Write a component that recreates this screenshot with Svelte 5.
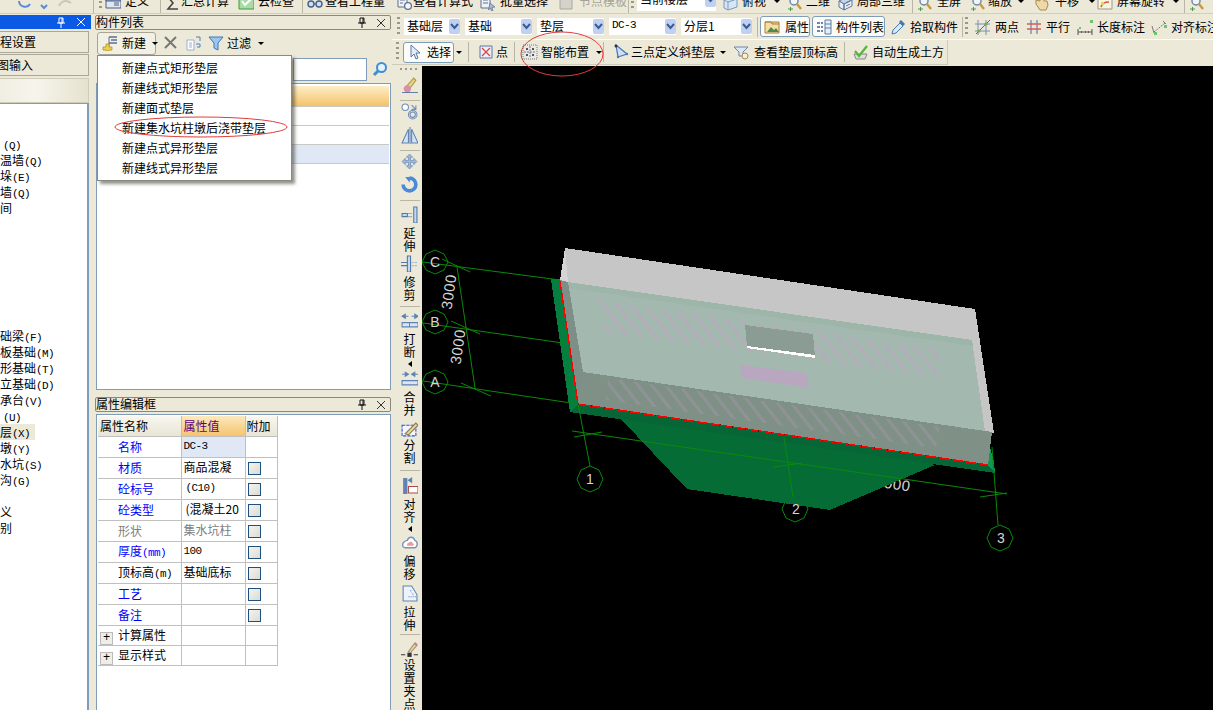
<script>
  const icons = {
    plusnew: '<path d="M7 2h8M9 5h6M7 8h8" stroke="#5a6f95" stroke-width="1.4"/><path d="M7 2v10" stroke="#5a6f95"/><path d="M4 9h3v3h3v3H7v1H4v-1H1v-3h3z" fill="#f2cf4a" stroke="#a58a22" stroke-width=".7"/>',
    del: '<path d="M2 2l11 11M13 2L2 13" stroke="#777" stroke-width="2"/>',
    copy: '<path d="M2 5h7v10H2z" fill="#fff" stroke="#9cb0cc"/><path d="M4 8h3M4 10h3M4 12h3" stroke="#9cb0cc"/><path d="M11 2h4v4M11 9h4v3h-3" fill="none" stroke="#4f7fbf"/>',
    funnel: '<path d="M1 2h14L10 8v7l-4-2V8z" fill="#9cc6ec" stroke="#3f78b8"/>',
    search: '<circle cx="9.5" cy="6.5" r="4.5" fill="#e4f2fd" stroke="#3c8fd6" stroke-width="2"/><path d="M6 10l-4 4" stroke="#3c8fd6" stroke-width="3"/>',
    def: '<path d="M1 3h15v10H1z" fill="#dfe6f2" stroke="#4d5f80"/><path d="M1 3h15v3H1z" fill="#8ea6cc" stroke="#4d5f80"/><path d="M9 8h5M9 10h5" stroke="#4d5f80"/>',
    sigma: '<path d="M13 2H3l5 6-5 6h10" fill="none" stroke="#444" stroke-width="1.6"/>',
    cloud: '<path d="M1 1h15v13H1z" fill="#a7dca7" stroke="#3e9c3e"/><path d="M4 6l3 4 6-6" fill="none" stroke="#fff" stroke-width="2"/>',
    glass: '<circle cx="4" cy="9" r="3" fill="#cfe0f2" stroke="#45608a" stroke-width="1.4"/><circle cx="12" cy="9" r="3" fill="#cfe0f2" stroke="#45608a" stroke-width="1.4"/><path d="M7 9h2" stroke="#45608a"/>',
    calc: '<path d="M1 2h9v10H1z" fill="#eef2f8" stroke="#5e7190"/><circle cx="11" cy="11" r="3.4" fill="#f5f8fb" stroke="#5e7190" stroke-width="1.3"/><path d="M3 5h5M3 8h3" stroke="#5e7190"/>',
    batch: '<path d="M1 2h9v11H1z" fill="#eef2f8" stroke="#5e7190"/><path d="M3 5h5M3 8h5" stroke="#5e7190"/><path d="M10 8l5 4-3 .5 1 3-1.500 .5-1-3-2 2z" fill="#a4b8dc" stroke="#4d5f80" stroke-width=".6"/>',
    tmpl: '<path d="M2 4h12v10H2z" fill="#d5d3c9" stroke="#aaa89e"/><path d="M5 1h6v3H5z" fill="#c8c6bc"/>',
    cube: '<path d="M2 5l9-3 4 2v8l-9 3-4-2z" fill="#d7e6f4" stroke="#7d9ab8"/><path d="M2 5l4 2 9-3M6 7v8" fill="none" stroke="#7d9ab8"/>',
    mag: '<circle cx="7" cy="6" r="4" fill="#f0f5fa" stroke="#6a86a8" stroke-width="1.4"/><path d="M10 9l4 5" stroke="#c99a3c" stroke-width="2.4"/><path d="M1 14h5M3.500 12v4" stroke="#4a9a4a"/>',
    cube2: '<path d="M2 6l8-4 5 3-8 4z" fill="#c4d4ea" stroke="#60789c"/><path d="M2 6v6l5 3V9zM7 9v6l8-4V5z" fill="#e8eef6" stroke="#60789c"/><path d="M9 8l4-2M9 11l4-2" stroke="#60789c"/>',
    hand: '<path d="M3 5l4 1V2l3 0 1 4 3 0 1 4-2 5H7L3 9z" fill="#f0d9a8" stroke="#a88a50"/>',
    rot: '<path d="M1 1h14v13H1z" fill="#f6f4e4" stroke="#9a9a8a"/><path d="M1 4h14" stroke="#5a8adf" stroke-width="2"/><path d="M4 12c1-4 4-5 8-5" fill="none" stroke="#d65a2a" stroke-width="1.6"/><path d="M4 7h3v3H4z" fill="#f2cf4a"/>',
    prop: '<path d="M1 3h14v11H1z" fill="#f6dfa4" stroke="#a0803c"/><path d="M1 3h6l1 2h7" fill="#f2c66a" stroke="#a0803c"/><path d="M3 13l4-5 3 3 2-2 3 4z" fill="#54894c"/>',
    list: '<path d="M1 3h3v2H1zM1 7h3v2H1zM1 11h3v2H1zM5 3h2v2H5zM5 7h2v2H5zM5 11h2v2H5z" fill="#6b86b0"/><path d="M9 1h6v14H9z" fill="#e6eef8" stroke="#5c7ba8"/><path d="M9 5h6M9 9h6" stroke="#5c7ba8"/>',
    pick: '<path d="M2 15l1-4 7-7 3 3-7 7z" fill="#d9e8f7" stroke="#4a78ac"/><path d="M9 3l2-2 4 4-2 2z" fill="#4a78ac"/>',
    two: '<path d="M3 1v15M11 1v15M0 5h15M0 12h15" stroke="#7d8db8"/><path d="M1 15L15 1" stroke="#d93a2a"/><circle cx="4" cy="12" r="1.600" fill="#6ab04a"/><circle cx="11" cy="5" r="1.600" fill="#6ab04a"/>',
    para: '<path d="M5 1v14M11 1v14" stroke="#7d8db8" stroke-width="1.4"/><path d="M1 5h14M1 10h14" stroke="#d0605a" stroke-width="1.4"/>',
    dim: '<path d="M1 13h14M1 10v6M15 10v6" stroke="#555"/><path d="M4 13h1M8 13h1M11 13h1" stroke="#222"/><path d="M2 8h2v2H2zM13 1h3v3h-3z" fill="#6cc46c"/>',
    ali: '<path d="M3 13L14 4" stroke="#777" stroke-dasharray="2 1"/><path d="M1 7l2 7M12 2l3 3" stroke="#777"/><path d="M13 6h3v3h-3zM3 13h3v3H3z" fill="#6cc46c"/>',
    sel: '<path d="M4 1v12l3-3 2 5 2-1-2-5h4z" fill="#e4ecf8" stroke="#5a78a8"/>',
    pt: '<path d="M2 2h12v12H2z" fill="#e9eef8" stroke="#5e75a6"/><path d="M4 4l8 8M12 4l-8 8" stroke="#d7473c" stroke-width="1.2"/>',
    smart: '<path d="M1 1h14v14H1z" fill="#eaeaea" stroke="#777" stroke-dasharray="1 1"/><path d="M8 2v12M2 8h12" stroke="#777" stroke-dasharray="2 1"/><circle cx="5" cy="5" r="1" fill="#222"/><circle cx="11" cy="5" r="1" fill="#222"/><circle cx="5" cy="11" r="1" fill="#222"/><circle cx="11" cy="11" r="1" fill="#222"/>',
    tri: '<path d="M3 1l2 12 9-3z" fill="#cde0f5" stroke="#4e78b8" stroke-width="1.3"/><circle cx="3" cy="2" r="1.500" fill="#333"/><circle cx="14" cy="10" r="1.200" fill="#4e78b8"/><circle cx="5" cy="13" r="1.200" fill="#4e78b8"/>',
    topv: '<path d="M1 3h14L10 8v4H6V8z" fill="#dde8f4" stroke="#6a86a8"/><circle cx="12" cy="12" r="3" fill="#f3f0d8" stroke="#a88a50"/>',
    auto: '<path d="M2 10h13l-2 5H4z" fill="#ddd" stroke="#888"/><path d="M3 7l4 5 8-10" fill="none" stroke="#55b53f" stroke-width="2.2"/>',
    brush: '<path d="M3 12l9-10 2 2-8 11z" fill="#e6d285" stroke="#b09a4a"/><circle cx="6" cy="12" r="3.400" fill="#d890a8"/><path d="M1 16h16" stroke="#4e6a9a" stroke-width="1.600"/>',
    circ: '<circle cx="4" cy="4" r="3" fill="#fff" stroke="#6f8db8"/><circle cx="11" cy="11" r="4" fill="none" stroke="#6f8db8"/><circle cx="11" cy="11" r="2.500" fill="none" stroke="#6f8db8"/><path d="M10 2l4 4M14 2v4h-4" fill="none" stroke="#6f8db8"/>',
    mirror: '<path d="M7 2L1 15h6zM10 2l6 13h-6z" fill="#d4e2f2" stroke="#5f83b4"/><path d="M8.500 0v16" stroke="#5f83b4"/>',
    move: '<path d="M8 1l3 3H9v3h3V5l3 3-3 3V9H9v3h2l-3 3-3-3h2V9H4v2L1 8l3-3v2h3V4H5z" fill="#9db8da" stroke="#5f83b4" stroke-width=".6"/>',
    rotv: '<path d="M8 2A6 6 0 1 1 2 8" fill="none" stroke="#4a8ad6" stroke-width="3.400"/><path d="M4 1l5 0-1 5z" fill="#4a8ad6"/>',
    ext: '<path d="M12 1h3v15h-3z" fill="#c7d8ec" stroke="#4f78ac"/><path d="M1 7h5v3H1z" fill="#c7d8ec" stroke="#4f78ac"/><path d="M7 7h4M7 10h4" stroke="#4f78ac" stroke-dasharray="1 1"/>',
    trim: '<path d="M6 1h3v15H6z" fill="#c7d8ec" stroke="#4f78ac"/><path d="M0 7h6M0 10h6" stroke="#4f78ac"/><path d="M10 7h6M10 10h6" stroke="#9fb6d4" stroke-dasharray="2 1"/>',
    brk: '<path d="M1 10h15v4H1z" fill="#dce6f2" stroke="#5f83b4"/><path d="M8 10v4" stroke="#5f83b4"/><path d="M7 4H1M1 4l3-2v4zM10 4h6M16 4l-3-2v4z" fill="#5f83b4" stroke="#5f83b4"/>',
    mrg: '<path d="M1 10h15v4H1z" fill="#dce6f2" stroke="#5f83b4"/><path d="M1 4h6M7 4L4 2v4zM16 4h-6M10 4l3-2v4z" fill="#5f83b4" stroke="#5f83b4"/>',
    spl: '<path d="M1 4h13v10H1z" fill="#f4f7fb" stroke="#2f4fe0" stroke-dasharray="3 1"/><path d="M4 12L14 2l2 2-9 9z" fill="#ecd8a0" stroke="#8a7a50"/>',
    alv: '<path d="M2 1h4v15H2z" fill="#5f83b4"/><path d="M9 3H7M7 3l3-2v4z" fill="#5f83b4" stroke="#5f83b4"/><path d="M7 9h9v6H7z" fill="#fff" stroke="#b04a4a"/>',
    off: '<path d="M2 12c-2-4 3-6 4-6 1-4 6-4 7 0 3 1 3 6 0 7H4z" fill="#fff" stroke="#7a93b8" stroke-width="1.300"/><path d="M6 11c-1-2 1-3 2-3 1-2 3 0 3 1 2 0 1 2 0 2z" fill="#e89a9a"/>',
    str: '<path d="M2 1h8l5 8v6H2z" fill="#eef3fa" stroke="#5f83b4"/><path d="M9 5l1 2M11 8l1 2M7 11h7" stroke="#5f83b4" stroke-dasharray="1 1"/>',
    grip: '<path d="M0 13h4M12 13h4" stroke="#333"/><path d="M6 11h4v4H6z" fill="#333"/><path d="M7 10l6-8 2 2-6 7z" fill="#ecd8a0" stroke="#a0907a"/><path d="M13 2l2 2" stroke="#d87a7a" stroke-width="2"/>'
  };

  const topItems = [
    { icon: 'def', label: '定义', w: 51, sep: true },
    { icon: 'sigma', label: '汇总计算', w: 73, g: 0 },
    { icon: 'cloud', label: '云检查', w: 60, sep: true },
    { icon: 'glass', label: '查看工程量', w: 90, g: 2 },
    { icon: 'calc', label: '查看计算式', w: 83, g: 0 },
    { icon: 'batch', label: '批量选择', w: 78 },
    { icon: 'tmpl', label: '节点模板', w: 69, off: true, g: 5 }
  ];
  const topRight = [
    { icon: 'cube', label: '俯视', w: 65, caret: true },
    { icon: 'mag', label: '二维', w: 50, g: 3 },
    { icon: 'cube2', label: '局部三维', w: 71, sep: true },
    { icon: 'mag', label: '全屏', w: 53 },
    { icon: 'mag', label: '缩放', w: 63, g: 2, caret: true },
    { icon: 'hand', label: '平移', w: 64, g: 6, caret: true },
    { icon: 'rot', label: '屏幕旋转', w: 83, caret: true, sep: true },
    { icon: 'mag', label: '', w: 24 }
  ];
  const combos = [
    { label: '基础层', w: 56 }, { label: '基础', w: 67 }, { label: '垫层', w: 67 },
    { label: 'DC-3', w: 67, m: true }, { label: '分层1', w: 71 }
  ];
  const tree = [
    ['', ''], ['', ''], ['', '(Q)'], ['温墙', '(Q)'], ['垛', '(E)'], ['墙', '(Q)'], ['间', ''],
    ['', ''], ['', ''], ['', ''], ['', ''], ['', ''], ['', ''], ['', ''],
    ['础梁', '(F)'], ['板基础', '(M)'], ['形基础', '(T)'], ['立基础', '(D)'], ['承台', '(V)'], ['', '(U)'],
    ['层', '(X)'], ['墩', '(Y)'], ['水坑', '(S)'], ['沟', '(G)'], ['', ''], ['义', ''], ['别', '']
  ];
  const menu = ['新建点式矩形垫层', '新建线式矩形垫层', '新建面式垫层', '新建集水坑柱墩后浇带垫层', '新建点式异形垫层', '新建线式异形垫层'];
  const props = [
    { n: '名称', v: 'DC-3', c: 'blue', sel: true, nochk: true, m: true },
    { n: '材质', v: '商品混凝', c: 'blue' },
    { n: '砼标号', v: '(C10)', c: 'blue', m: true, ind: true },
    { n: '砼类型', v: '(混凝土20', c: 'blue', ind: true },
    { n: '形状', v: '集水坑柱', c: 'gray' },
    { n: '厚度', unit: '(mm)', v: '100', c: 'blue', m: true },
    { n: '顶标高', unit: '(m)', v: '基础底标', c: 'black' },
    { n: '工艺', v: '', c: 'blue' },
    { n: '备注', v: '', c: 'blue' }
  ];
  const vtools = [
    { icon: 'brush', h: 21 }, { sep: true }, { icon: 'circ', h: 24 }, { icon: 'mirror', h: 20 }, { sep: true },
    { icon: 'move', h: 23 }, { icon: 'rotv', h: 21 }, { sep: true },
    { icon: 'ext', t: '延伸', h: 52, pt: 3 }, { icon: 'trim', t: '修剪', h: 48 }, { sep: true },
    { icon: 'brk', t: '打断', more: true, h: 61, pt: 3 }, { icon: 'mrg', t: '合并', h: 51 },
    { icon: 'spl', t: '分割', h: 46, g: 0 }, { sep: true },
    { icon: 'alv', t: '对齐', more: true, h: 61, pt: 4 }, { icon: 'off', t: '偏移', h: 51 }, { icon: 'str', t: '拉伸', h: 46 }, { sep: true },
    { icon: 'grip', t: '设置夹点', h: 74, pt: 4, g: 0 }
  ];
  const greyPts = '565,248 975,309 994,433 985,431 972,340 568,282';
</script>

{#snippet ic(name, size = 16)}
  <svg class="ic" width={size} height={size} viewBox="0 0 16 16">{@html icons[name]}</svg>
{/snippet}

{#snippet panelhead(title)}
  <div class="phead">
    <span class="ptitle">{title}</span>
    <span class="pbtns">
      <svg width="10" height="11" viewBox="0 0 10 11"><path d="M3 1h4v5H3zM1 6h8M5 6v5M6 1v5" fill="none" stroke="#111"/></svg>
      <svg width="10" height="10" viewBox="0 0 10 10"><path d="M1 1l8 8M9 1l-8 8" stroke="#333"/></svg>
    </span>
  </div>
{/snippet}

{#snippet grip()}
  <span class="grip"></span>
{/snippet}

{#snippet caretbox()}
  <svg width="11" height="15" viewBox="0 0 11 15"><path d="M2 5l3.500 4L9 5" fill="none" stroke="#3c5a94" stroke-width="2"/></svg>
{/snippet}

<div class="app">
  <div class="top">
    <div class="toprow">
      <svg class="undo" width="72" height="14" viewBox="0 0 72 14"><path d="M2 3a6 6 0 0 0 11 3M24 7l3 3 3-3" fill="none" stroke="#5a8adf" stroke-width="2"/><path d="M42 8c3-6 8-6 12-3" fill="none" stroke="#c9c7bb" stroke-width="2"/></svg>
      <span class="topsep"></span>
      {@render grip()}
      {#each topItems as it}
        <span class="titem" class:off={it.off} style="width:{it.w}px;gap:{it.g ?? 4}px">{@render ic(it.icon)}{it.label}</span>
        {#if it.sep}<span class="topsep"></span>{/if}
      {/each}
      <span class="topsep tight"></span>
      {@render grip()}
      <span class="tcombo">当前楼层<i class="arr">{@render caretbox()}</i></span>
      {#each topRight as it}
        <span class="titem" style="width:{it.w}px;gap:{it.g ?? 4}px">{@render ic(it.icon)}{it.label}{#if it.caret}<b class="caret"></b>{/if}</span>
        {#if it.sep}<span class="topsep"></span>{/if}
      {/each}
    </div>
  </div>

  <div class="main">
    <aside class="left">
      <div class="lhead">
        <svg width="10" height="11" viewBox="0 0 10 11"><path d="M3 1h4v5H3zM1 6h8M5 6v5M6 1v5" fill="none" stroke="#fff"/></svg>
        <svg width="10" height="10" viewBox="0 0 10 10"><path d="M1 1l8 8M9 1l-8 8" stroke="#fff"/></svg>
      </div>
      <div class="lbtn">程设置</div>
      <div class="lbtn second">图输入</div>
      <div class="lband"></div>
      <div class="tree">
        {#each tree as [cn, key], i}
          <div class="trow" class:on={i === 20} class:pad={!cn}>{cn}{#if key}<span class="m">{key}</span>{/if}</div>
        {/each}
      </div>
    </aside>

    <section class="mid">
      {@render panelhead('构件列表')}
      <div class="listbar">
        <button class="newbtn">{@render ic('plusnew')}新建<b class="caret"></b></button>
        {@render ic('del')}
        {@render ic('copy')}
        <span class="filter">{@render ic('funnel')}过滤<b class="caret"></b></span>
      </div>
      <div class="searchrow">
        <div class="searchbox"></div>
        {@render ic('search')}
      </div>
      <div class="listbox">
        <div class="lrow headrow"></div>
        <div class="lrow"></div>
        <div class="lrow"></div>
        <div class="lrow active"></div>
      </div>
      <div class="pgap"></div>
      {@render panelhead('属性编辑框')}
      <div class="propbox">
        <table>
          <thead>
            <tr><th class="c1">属性名称</th><th class="c2">属性值</th><th class="c3">附加</th></tr>
          </thead>
          <tbody>
            {#each props as p}
              <tr>
                <td class="name {p.c}">{p.n}{#if p.unit}<span class="m">{p.unit}</span>{/if}</td>
                <td class="val" class:sel={p.sel} class:grayv={p.c === 'gray'} class:ind={p.ind} class:m={p.m}>{p.v}</td>
                <td class="chk">{#if !p.nochk}<span class="box"></span>{/if}</td>
              </tr>
            {/each}
            {#each ['计算属性', '显示样式'] as g}
              <tr class="grp">
                <td><span class="plus">+</span>{g}</td><td></td><td></td>
              </tr>
            {/each}
          </tbody>
        </table>
      </div>
    </section>

    <section class="right">
      <div class="bar bar1">
        {@render grip()}
        {#each combos as c}
          <span class="combo" class:m={c.m} style="width:{c.w}px">{c.label}<i class="arr">{@render caretbox()}</i></span>
        {/each}
        <span class="vsep s1"></span>
        <span class="tbtn press w50 gp5">{@render ic('prop')}属性</span>
        <span class="tbtn press w73">{@render ic('list')}构件列表</span>
        <span class="tbtn w70">{@render ic('pick')}拾取构件</span>
        <span class="vsep s2"></span>
        {@render grip()}
        <span class="tbtn w51">{@render ic('two')}两点</span>
        <span class="tbtn w51">{@render ic('para')}平行</span>
        <span class="tbtn w74">{@render ic('dim')}长度标注</span>
        <span class="tbtn w75">{@render ic('ali')}对齐标注</span>
      </div>
      <div class="bar2wrap">
        <div class="bar bar2">
          {@render grip()}
          <span class="tbtn press selbtn">{@render ic('sel')}选择</span><b class="caret c5"></b>
          <span class="vsep"></span>
          <span class="tbtn w33">{@render ic('pt')}点</span>
          <span class="vsep"></span>
          <span class="tbtn w78">{@render ic('smart')}智能布置<b class="caret"></b></span>
          <span class="vsep s4"></span>
          <span class="tbtn w104">{@render ic('tri')}三点定义斜垫层</span><b class="caret c6"></b>
          <span class="tbtn w108">{@render ic('topv')}查看垫层顶标高</span>
          <span class="vsep s3"></span>
          <span class="tbtn w94">{@render ic('auto')}自动生成土方</span>
        </div>
      </div>
      <div class="work">
        <div class="vbar">
          <span class="hgrip"></span>
          {#each vtools as t}
            {#if t.sep}
              <span class="hsep"></span>
            {:else}
              <div class="vitem" style="height:{t.h}px;padding-top:{t.pt ?? 0}px;gap:{t.g ?? 3}px">
                {@render ic(t.icon, 17)}
                {#if t.t}<span class="vtext">{t.t}</span>{/if}
                {#if t.more}<b class="lcaret"></b>{/if}
              </div>
            {/if}
          {/each}
        </div>
        <svg class="canvas" viewBox="422 66 791 644" width="791" height="644" shape-rendering="crispEdges">
          <defs>
            <pattern id="hatch" width="11" height="12" patternUnits="userSpaceOnUse" patternTransform="rotate(-38)">
              <rect x="0" width="3" height="12" fill="#cc9ccc"/>
            </pattern>
          </defs>

          <!-- dimension text and axis 2 bubble sit under the foundation -->
          <text x="893" y="489" class="dimt" text-anchor="middle" transform="rotate(8 893 484)">3000</text>
          <polygon points="795,496 804,500 808,509 804,518 795,522 786,518 782,509 786,500" fill="none" stroke="#0a8a0a" shape-rendering="geometricPrecision"/>

          <!-- green cushion -->
          <polygon points="620,418 687,489 830,510 935,465 800,430" fill="#056c35"/>
          <polygon points="551,279 560,279 578,404 570,412" fill="#057f40"/>
          <polygon points="578,404 988,465 995,473 570,412" fill="#066636"/>
          <polygon points="990,447 994,462 995,473 988,465" fill="#0a9a50"/>

          <!-- pit body -->
          <polygon points={greyPts} fill="#c6c6c6"/>
          <polygon points="565,248 568,282 560,280" fill="#d4d4d4"/>
          <polygon points="568,282 972,340 985,431 583,372" fill="#a3b8ae"/>
          <polygon points="568,282 972,340 973,346 569,288" fill="#9eb5aa"/>
          <polygon points="598,300 938,349 941,378 606,332" fill="url(#hatch)" opacity=".4"/>
          <polygon points="560,280 568,282 583,372 578,404" fill="#7d8f86"/>
          <polygon points="583,372 992,432 988,465 578,404" fill="#7f9187"/>
          <polygon points="608,378 940,427 936,448 606,400" fill="url(#hatch)" opacity=".22"/>
          <polygon points="745,325 813,334 815,356 747,346" fill="#8b9c94"/>
          <polygon points="747,346 815,355 815,358 747,348" fill="#fff"/>
          <polygon points="740,365 806,373 809,388 742,378" fill="#b9a7bf"/>
          <polyline points="560,281 578,404 988,465" fill="none" stroke="#f00" stroke-width="1.4"/>
          <line x1="578" y1="404" x2="988" y2="465" stroke="#000" stroke-width="1.4" stroke-dasharray="1 12" opacity=".5"/>

          <!-- axis lines -->
          <g fill="none" stroke="#0a8a0a" stroke-width="1" shape-rendering="geometricPrecision">
            <path d="M423 262L560 280M423 323L570 344M423 381L578 404"/>
            <path d="M457 267L475 388M442 259L470 272M451 321L480 334M461 383L491 396"/>
            <path d="M578 404L590 466M574 437L602 432M572 431L1007 494M784 437L793 497M774 467L802 463M980 497L1007 493M992 447L998 525"/>
            <polygon points="435,250 444,254 448,262 444,270 435,274 426,270 422,262 426,254"/>
            <polygon points="435,310 444,314 448,322 444,330 435,334 426,330 422,322 426,314"/>
            <polygon points="435,370 444,374 448,382 444,390 435,394 426,390 422,382 426,374"/>
            <polygon points="590,466 599,470 603,479 599,488 590,492 581,488 577,479 581,470"/>
            <polygon points="1000,525 1009,529 1013,538 1009,547 1000,551 991,547 987,538 991,529"/>
          </g>
          <g class="axt" text-anchor="middle">
            <text x="435" y="267">C</text><text x="435" y="327">B</text><text x="435" y="387">A</text>
            <text x="590" y="484">1</text><text x="796" y="514">2</text><text x="1001" y="543">3</text>
          </g>
          <text x="450" y="292" class="dimt" text-anchor="middle" dominant-baseline="middle" transform="rotate(-82 450 292)">3000</text>
          <text x="459" y="347" class="dimt" text-anchor="middle" dominant-baseline="middle" transform="rotate(-82 459 347)">3000</text>
        </svg>
      </div>
    </section>
  </div>

  <!-- popup menu opened from the 新建 button -->
  <div class="menu">
    {#each menu as m}
      <div class="mitem">{m}</div>
    {/each}
  </div>

  <!-- hand-drawn red marks on top of the screenshot -->
  <svg class="marks" width="1213" height="710">
    <ellipse cx="201" cy="127" rx="86" ry="10" />
    <ellipse cx="562" cy="54" rx="41" ry="22" />
  </svg>
</div>

<style>
  :global(body) {
    margin: 0;
    background: #ece9d8;
  }
  .app {
    position: relative;
    width: 1213px;
    height: 710px;
    overflow: hidden;
    background: #ece9d8;
    color: #000;
    font: 12px/16px "Noto Sans CJK SC", sans-serif;
  }
  .ic {
    flex: none;
  }
  .m {
    font-family: "Liberation Mono", monospace;
    font-size: 11px;
    letter-spacing: -.6px;
  }

  .top {
    height: 14px;
    overflow: hidden;
    border-bottom: 1px solid #d2cfbe;
    box-sizing: border-box;
  }
  .toprow {
    display: flex;
    align-items: center;
    height: 26px;
    margin-top: -12px;
    padding-left: 17px;
    white-space: nowrap;
  }
  .undo {
    flex: none;
    margin-top: 8px;
  }
  .topsep {
    flex: none;
    width: 1px;
    height: 24px;
    margin: 0 4px;
    background: #b9b6a4;
  }
  .topsep.tight {
    margin: 0 1px;
  }
  .grip {
    flex: none;
    width: 3px;
    height: 20px;
    margin: 0 3px 0 1px;
    background: repeating-linear-gradient(#9a9886 0 2px, transparent 2px 5px);
  }
  .titem {
    flex: none;
    display: flex;
    align-items: center;
    box-sizing: border-box;
  }
  .titem .ic {
    margin-top: 4px;
  }
  .titem.off {
    color: #a5a397;
  }
  .tcombo {
    flex: none;
    position: relative;
    width: 79px;
    height: 20px;
    padding-left: 3px;
    box-sizing: border-box;
    background: #fff;
    margin-right: 6px;
  }
  .caret {
    flex: none;
    display: inline-block;
    width: 0;
    height: 0;
    margin-left: 4px;
    border: 3px solid transparent;
    border-top: 3px solid #000;
    border-bottom: 0;
    vertical-align: middle;
  }
  .arr {
    position: absolute;
    right: 0;
    top: 1px;
    width: 11px;
    height: 15px;
    border-radius: 2px;
    background: #bfd0f0;
  }
  .arr svg {
    display: block;
  }

  .main {
    display: flex;
    height: 696px;
  }
  .left {
    flex: none;
    width: 91px;
    margin-right: 4px;
    padding-top: 1px;
    box-sizing: border-box;
  }
  .lhead {
    display: flex;
    justify-content: flex-end;
    align-items: center;
    gap: 10px;
    height: 14px;
    padding-right: 5px;
    background: #0a5ae6;
  }
  .lbtn {
    height: 22px;
    margin: 2px 2px 0 0;
    line-height: 19px;
    border: 1px solid #aca899;
    border-left: 0;
    box-sizing: border-box;
    background: #ece9d8;
  }
  .lbtn.second {
    margin-top: 1px;
    text-indent: -3px;
  }
  .lband {
    height: 25px;
    margin: 2px 2px 0 0;
    border: 1px solid #cfccba;
    border-left: 0;
    box-sizing: border-box;
    background: linear-gradient(90deg, #f0eee2, #f6f5ec 40%, #e6e2cf);
  }
  .tree {
    height: 607px;
    margin-right: 2px;
    background: #fff;
    border-right: 2px solid #7f9db9;
    border-top: 1px solid #7f9db9;
    box-sizing: border-box;
  }
  .trow {
    height: 16px;
    width: fit-content;
    min-width: 1px;
    padding-right: 2px;
    white-space: nowrap;
  }
  .trow.pad {
    padding-left: 3px;
  }
  .trow.on {
    width: 35px;
    box-sizing: border-box;
    background: #ece9d8;
  }

  .mid {
    flex: none;
    width: 297px;
    padding-top: 1px;
    box-sizing: border-box;
  }
  .phead {
    display: flex;
    justify-content: space-between;
    align-items: center;
    height: 15px;
    width: 296px;
    border: 1px solid #8b8978;
    border-radius: 2px;
    box-sizing: border-box;
    background: #ece9d8;
  }
  .ptitle {
    margin-top: -1px;
  }
  .pbtns {
    display: flex;
    align-items: center;
    gap: 9px;
    padding-right: 4px;
  }
  .pbtns svg {
    display: block;
  }
  .listbar {
    display: flex;
    align-items: center;
    gap: 5px;
    height: 25px;
    padding: 1px 0 0 2px;
    box-sizing: border-box;
  }
  .newbtn {
    flex: none;
    display: flex;
    align-items: center;
    gap: 4px;
    width: 59px;
    height: 23px;
    padding: 0 0 0 3px;
    border: 1px solid #a7a595;
    border-radius: 3px;
    background: #f2f0e4;
    font: inherit;
    white-space: nowrap;
    margin-right: 1px;
  }
  .newbtn .caret {
    margin-left: 2px;
  }
  .listbar .ic {
    margin-left: 1px;
  }
  .filter {
    display: flex;
    align-items: center;
    gap: 3px;
    margin-left: 1px;
  }
  .searchrow {
    display: flex;
    align-items: center;
    gap: 5px;
    height: 28px;
    padding-left: 198px;
    box-sizing: border-box;
  }
  .searchbox {
    width: 74px;
    height: 23px;
    border: 1px solid #7f9db9;
    background: #fff;
    box-sizing: border-box;
  }
  .listbox {
    width: 295px;
    height: 307px;
    margin-left: 1px;
    padding: 2px 1px 2px 1px;
    border: 1px solid #7f9db9;
    box-sizing: border-box;
    background: #fff;
  }
  .lrow {
    height: 18px;
    border-bottom: 1px solid #c8c8c8;
  }
  .lrow.headrow {
    height: 20px;
    background: linear-gradient(#fdeec9, #f4c26a);
  }
  .lrow.active {
    background: #dfe8f4;
  }
  .pgap {
    height: 7px;
  }
  .propbox {
    width: 295px;
    height: 300px;
    margin: 2px 0 0 1px;
    padding: 1px 1px;
    border: 1px solid #7f9db9;
    box-sizing: border-box;
    background: #fff;
  }
  table {
    width: 179px;
    border-collapse: collapse;
    table-layout: fixed;
  }
  th, td {
    padding: 0;
    border: 1px solid #c0c0c0;
    font-weight: 400;
    white-space: nowrap;
    overflow: hidden;
    box-sizing: border-box;
  }
  thead th {
    border-top: 0;
    text-align: left;
    height: 20px;
    background: linear-gradient(#f8f7f0, #e8e5d6);
  }
  th:first-child, td:first-child {
    border-left: 0;
  }
  .c1 {
    width: 83px;
    padding-left: 2px;
  }
  .c2 {
    width: 64px;
    padding-left: 2px;
    color: #5a0080;
    background: linear-gradient(#fde8bd, #f4c46e) !important;
  }
  .c3 {
    width: 32px;
    padding-left: 1px;
  }
  td {
    height: 21px;
  }
  .name {
    padding-left: 20px;
  }
  .blue { color: #00f; }
  .gray { color: #808080; }
  .val {
    padding-left: 2px;
    vertical-align: top;
    line-height: 17px;
  }
  .val.m {
    line-height: 19px;
  }
  .val.ind {
    padding-left: 4px;
  }
  .val.sel {
    background: #dfe8f4;
  }
  .val.grayv {
    color: #808080;
  }
  .box {
    display: block;
    width: 13px;
    height: 13px;
    margin: 2px 0 0 2px;
    border: 1px solid #1c5180;
    box-sizing: border-box;
    background: linear-gradient(135deg, #f4f4ee, #dcdcd4);
  }
  .grp td {
    height: 19px;
    padding-top: 1px;
  }
  .plus {
    display: inline-block;
    width: 11px;
    height: 11px;
    margin: 0 5px 0 2px;
    border: 1px solid #bbb;
    font: 12px/10px "Liberation Mono", monospace;
    text-align: center;
    background: #eeeee6;
    vertical-align: -1px;
  }

  .right {
    flex: 1;
    min-width: 0;
    display: flex;
    flex-direction: column;
  }
  .bar {
    display: flex;
    align-items: center;
    white-space: nowrap;
  }
  .bar1 {
    height: 26px;
    padding-left: 5px;
    background: #ece9d8;
    border-bottom: 1px solid #fdfcf5;
    box-sizing: border-box;
  }
  .bar .grip {
    margin: 0 4px 0 0;
  }
  .combo {
    flex: none;
    position: relative;
    height: 17px;
    margin-right: 5px;
    padding-left: 3px;
    box-sizing: border-box;
    line-height: 15px;
    background: #fff;
  }
  .combo.m {
    font-family: "Liberation Mono", monospace;
    font-size: 11px;
    letter-spacing: -.6px;
  }
  .vsep {
    flex: none;
    width: 1px;
    height: 20px;
    margin: 0 6px;
    background: #b9b6a4;
  }
  .vsep.s1 { margin: 0 2px 0 0; }
  .vsep.s2 { margin: 0 2px 0 5px; }
  .vsep.s3 { margin: 0 4px 0 6px; }
  .vsep.s4 { margin: 0 6px 0 4px; }
  .tbtn {
    flex: none;
    display: flex;
    align-items: center;
    gap: 4px;
    height: 21px;
    padding-left: 3px;
    box-sizing: border-box;
  }
  .tbtn.press {
    border: 1px solid #7f9db9;
    border-radius: 3px;
    background: #fbfbf7;
    margin-right: 2px;
  }
  .gp5 { gap: 5px; }
  .w33 { width: 33px; gap: 2px; }
  .w50 { width: 50px; }
  .w51 { width: 51px; }
  .w70 { width: 70px; }
  .w73 { width: 73px; }
  .w74 { width: 74px; }
  .w75 { width: 75px; }
  .w78 { width: 78px; padding-left: 1px; gap: 3px; }
  .w94 { width: 94px; }
  .w104 { width: 104px; gap: 2px; }
  .w108 { width: 108px; gap: 5px; }
  .bar2wrap {
    height: 26px;
    display: flex;
  }
  .bar2 {
    width: 556px;
    height: 25px;
    padding-left: 4px;
    border-right: 1px solid #cfccba;
    border-bottom: 1px solid #cfccba;
    box-sizing: border-box;
    background: #ece9d8;
  }
  .selbtn {
    width: 51px;
    gap: 4px;
    padding-left: 3px;
  }
  .c5 {
    margin: 0;
  }
  .c6 {
    margin: 0 4px 0 6px;
  }
  .work {
    flex: 1;
    min-height: 0;
    display: flex;
    padding-left: 5px;
  }
  .vbar {
    flex: none;
    width: 25px;
    display: flex;
    flex-direction: column;
    align-items: center;
  }
  .hgrip {
    flex: none;
    width: 19px;
    height: 2px;
    margin: 2px 0 6px;
    background: repeating-linear-gradient(90deg, #9a9886 0 2px, transparent 2px 5px);
  }
  .hsep {
    flex: none;
    width: 20px;
    height: 1px;
    margin: 3px 0 2px;
    background: #b9b6a4;
  }
  .vitem {
    flex: none;
    display: flex;
    flex-direction: column;
    align-items: center;
    justify-content: flex-start;
    box-sizing: border-box;
  }
  .vtext {
    width: 13px;
    line-height: 13px;
    text-align: center;
    word-break: break-all;
  }
  .lcaret {
    flex: none;
    width: 0;
    height: 0;
    border: 3px solid transparent;
    border-right: 4px solid #000;
    border-left: 0;
  }
  .canvas {
    flex: none;
    display: block;
    background: #000;
  }
  .dimt {
    fill: #d6d6d6;
    font: 15px "Liberation Sans", sans-serif;
    letter-spacing: .5px;
  }
  .axt text {
    fill: #d6d6d6;
    font: 14px "Liberation Sans", sans-serif;
  }

  .menu {
    position: absolute;
    left: 97px;
    top: 55px;
    width: 195px;
    height: 126px;
    padding-top: 2px;
    box-sizing: border-box;
    background: #fff;
    border: 1px solid #8a8a80;
    box-shadow: 3px 3px 3px rgba(60, 60, 50, .55);
  }
  .mitem {
    height: 20px;
    padding-left: 24px;
    line-height: 20px;
  }
  .marks {
    position: absolute;
    left: 0;
    top: 0;
    pointer-events: none;
  }
  .marks ellipse {
    fill: none;
    stroke: #e23c3c;
    stroke-width: 1;
  }
</style>
